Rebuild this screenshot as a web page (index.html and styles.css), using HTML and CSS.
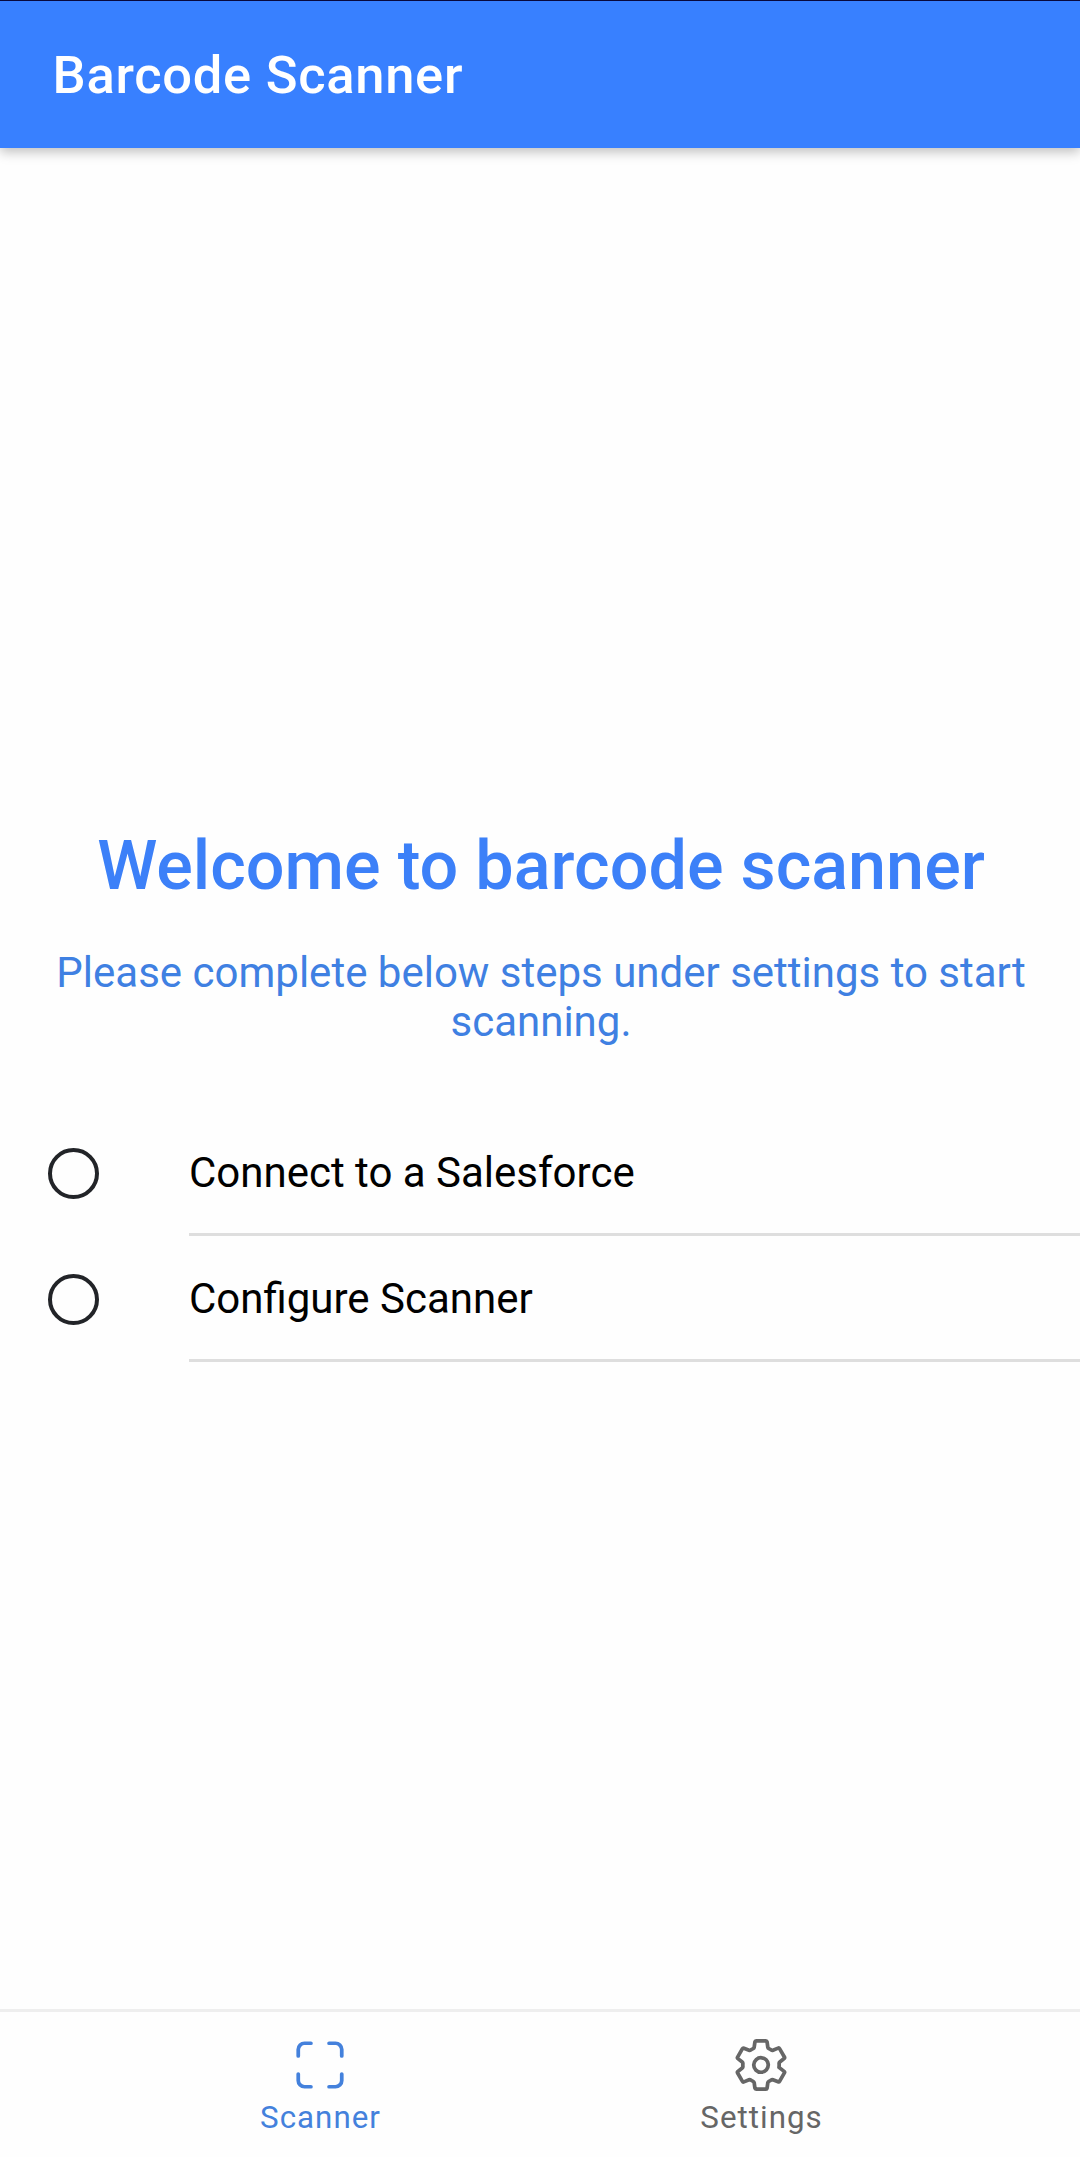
FILE: index.html
```html
<!DOCTYPE html>
<html lang="en">
<head>
<meta charset="utf-8">
<title>Barcode Scanner</title>
<link rel="stylesheet" href="styles.css">
</head>
<body>
<header class="toolbar"><h1 class="toolbar-title">Barcode Scanner</h1></header>
<main class="content">
<h2 class="welcome">Welcome to barcode scanner</h2>
<p class="hint">Please complete below steps under settings to start scanning.</p>
<ul class="steps">
<li class="step"><span class="circle"></span><span class="step-label">Connect to a Salesforce</span></li>
<li class="step"><span class="circle"></span><span class="step-label">Configure Scanner</span></li>
</ul>
</main>
<nav class="tabs">
<a class="tab active"><svg class="icon" viewBox="0 0 512 512"><path d="M336 448h56a56 56 0 0 0 56-56v-56M448 176v-56a56 56 0 0 0-56-56h-56M176 448h-56a56 56 0 0 1-56-56v-56M64 176v-56a56 56 0 0 1 56-56h56"/></svg><span class="tab-label">Scanner</span></a>
<a class="tab"><svg class="icon" viewBox="0 0 512 512"><path d="M262.29 192.31a64 64 0 1 0 57.4 57.4 64.13 64.13 0 0 0-57.4-57.4zM416.39 256a154.34 154.34 0 0 1-1.53 20.79l45.21 35.46a10.81 10.81 0 0 1 2.45 13.75l-42.77 74a10.81 10.81 0 0 1-13.14 4.59l-44.9-18.08a16.11 16.11 0 0 0-15.17 1.75A164.48 164.48 0 0 1 325 400.8a15.94 15.94 0 0 0-8.82 12.14l-6.73 47.89a11.08 11.08 0 0 1-10.68 9.17h-85.54a11.11 11.11 0 0 1-10.69-8.87l-6.72-47.82a16.07 16.07 0 0 0-9-12.22 155.3 155.3 0 0 1-21.46-12.57 16 16 0 0 0-15.11-1.71l-44.89 18.07a10.81 10.81 0 0 1-13.14-4.58l-42.77-74a10.8 10.8 0 0 1 2.45-13.75l38.21-30a16.05 16.05 0 0 0 6-14.08c-.36-4.17-.58-8.33-.58-12.5s.21-8.27.58-12.35a16 16 0 0 0-6.07-13.94l-38.19-30A10.81 10.81 0 0 1 49.48 186l42.77-74a10.81 10.81 0 0 1 13.14-4.59l44.9 18.08a16.11 16.11 0 0 0 15.17-1.75A164.48 164.48 0 0 1 187 111.2a15.94 15.94 0 0 0 8.82-12.14l6.73-47.89A11.08 11.08 0 0 1 213.23 42h85.54a11.11 11.11 0 0 1 10.69 8.87l6.72 47.82a16.07 16.07 0 0 0 9 12.22 155.3 155.3 0 0 1 21.46 12.57 16 16 0 0 0 15.11 1.71l44.89-18.07a10.81 10.81 0 0 1 13.14 4.58l42.77 74a10.8 10.8 0 0 1-2.45 13.75l-38.21 30a16.05 16.05 0 0 0-6.05 14.08c.33 4.14.55 8.3.55 12.47z"/></svg><span class="tab-label">Settings</span></a>
</nav>
</body>
</html>
```
FILE: styles.css
```css
* { box-sizing: border-box; }
body { margin: 0; height: 2157px; display: flex; flex-direction: column; background: #fefefe; color: #000; font-family: Roboto, sans-serif; }
.toolbar { height: 148px; display: flex; align-items: center; padding: 0 52.6px; background: #3880ff; border-top: 1px solid #08083c; box-shadow: 0 4px 11px rgba(0,0,0,.25); }
.toolbar-title { margin: 0; color: #fff; font-size: 52.5px; font-weight: 500; letter-spacing: .7px; }
.content { flex: 1; padding-top: 677px; text-align: center; }
.welcome { margin: 0; padding-left: 2px; font-size: 68.3px; line-height: 82px; font-weight: 500; color: #3c80f8; }
.hint { margin: 41px 39px 64px 41px; font-size: 42px; line-height: 49px; color: #3f80e2; }
.steps { list-style: none; margin: 0; padding: 0; color: #000; text-align: left; }
.step { display: flex; align-items: center; height: 126px; padding-left: 48px; }
.circle { width: 51px; height: 51px; margin: 1px 90px 0 0; border: 4px solid #222428; border-radius: 50%; }
.step-label { flex: 1; height: 126px; line-height: 126px; border-bottom: 3px solid #dedede; font-size: 42px; }
.tabs { height: 148px; display: flex; justify-content: center; padding-left: 2px; border-top: 3px solid #eee; }
.tab { width: 441px; display: flex; flex-direction: column; align-items: center; padding-top: 23.5px; color: #666; }
.tab.active { color: #4481dc; }
.icon { width: 58px; height: 58px; margin-right: 1px; fill: none; stroke: currentColor; stroke-width: 33; stroke-linecap: round; stroke-linejoin: round; }
.tab-label { margin-top: 5.5px; font-size: 31.3px; line-height: 38px; letter-spacing: 1px; }
```
